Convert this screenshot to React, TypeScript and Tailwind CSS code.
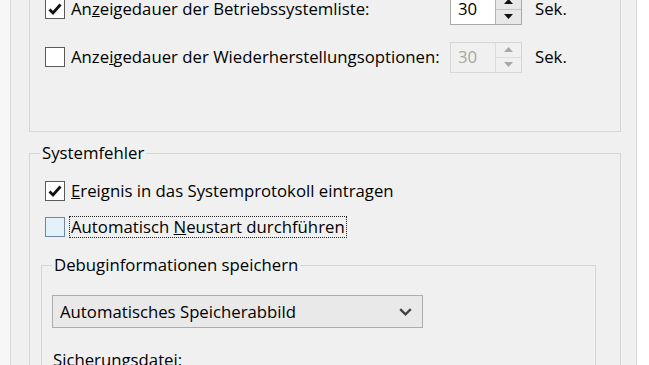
import type { ReactNode } from "react";

const font = { fontFamily: '"Open Sans", "Noto Sans", sans-serif' };

function Box({ checked, hover }: { checked?: boolean; hover?: boolean }) {
  return (
    <div
      className={`w-[20px] h-[20px] shrink-0 border flex items-center justify-center ${
        hover ? "border-[#6e8aa3] bg-[#e3f1fb]" : "border-[#5a5a5a] bg-white"
      }`}
    >
      {checked && (
        <svg width="14" height="12" viewBox="0 0 14 12">
          <path d="M1.5 6.5 L5 10 L12.5 1.5" fill="none" stroke="#111" strokeWidth="2.8" />
        </svg>
      )}
    </div>
  );
}

function Label({ children, focus }: { children: ReactNode; focus?: boolean }) {
  return (
    <span
      className={`border px-[1px] leading-[20px] whitespace-nowrap ${
        focus ? "border-dotted border-[#222]" : "border-transparent"
      }`}
    >
      {children}
    </span>
  );
}

function Spinner({ disabled }: { disabled?: boolean }) {
  const arrow = disabled ? "#a8a8a8" : "#111";
  return (
    <div
      className={`flex h-[31px] w-[72px] shrink-0 border ${
        disabled ? "border-[#d6d6d6] bg-[#f0f0f0] text-[#a6a6a6]" : "border-[#a9a9a9] bg-white text-black"
      }`}
    >
      <div className="flex-1 flex items-center pl-[7px]">30</div>
      <div
        className={`w-[26px] flex flex-col border-l ${
          disabled ? "border-[#dcdcdc] bg-[#f0f0f0]" : "border-[#b5b5b5] bg-[#e8e8e8]"
        }`}
      >
        <div className={`flex-1 flex items-center justify-center border-b ${disabled ? "border-[#dcdcdc]" : "border-[#c4c4c4]"}`}>
          <svg width="9" height="5" viewBox="0 0 9 5">
            <path d="M0 5 L4.5 0 L9 5 Z" fill={arrow} />
          </svg>
        </div>
        <div className="flex-1 flex items-center justify-center">
          <svg width="9" height="5" viewBox="0 0 9 5">
            <path d="M0 0 L4.5 5 L9 0 Z" fill={arrow} />
          </svg>
        </div>
      </div>
    </div>
  );
}

function TimeRow({ checked, children, disabled }: { checked?: boolean; children: ReactNode; disabled?: boolean }) {
  return (
    <div className="flex items-center h-[32px] pl-[15px]">
      <div className="flex items-center gap-[4px] w-[405px]">
        <Box checked={checked} />
        <Label>{children}</Label>
      </div>
      <Spinner disabled={disabled} />
      <span className="ml-[13px]">Sek.</span>
    </div>
  );
}

export default function App() {
  return (
    <div style={font} className="flex w-[649px] h-[365px] overflow-hidden bg-white text-[16.75px] text-black">
      <div className="w-[11px] shrink-0 bg-[#f7f7f7] border-r border-[#dadada]" />
      <div className="w-[626px] shrink-0 bg-[#f0f0f0] border-r border-[#d6d6d6] pl-[18px]">
        <div className="mt-[-30px] h-[162px] w-[592px] border border-[#d6d6d6] pt-[22px] flex flex-col gap-[16px]">
          <TimeRow checked>
            An<span className="underline">z</span>eigedauer der Betriebssystemliste:
          </TimeRow>
          <TimeRow disabled>
            Anze<span className="underline">i</span>gedauer der Wiederherstellungsoptionen:
          </TimeRow>
        </div>

        <fieldset className="mt-[11px] w-[592px] h-[260px] border border-[#d6d6d6]">
          <legend className="ml-[10px] px-[2px] leading-[20px]">Systemfehler</legend>
          <div className="mt-[16px] pl-[15px] flex flex-col gap-[12px]">
            <div className="flex items-center gap-[4px] h-[24px]">
              <Box checked />
              <Label>
                <span className="underline">E</span>reignis in das Systemprotokoll eintragen
              </Label>
            </div>
            <div className="flex items-center gap-[4px] h-[24px]">
              <Box hover />
              <Label focus>
                Automatisch <span className="underline">N</span>eustart durchführen
              </Label>
            </div>
          </div>

          <fieldset className="mt-[16px] ml-[11px] w-[555px] h-[140px] border border-[#d6d6d6]">
            <legend className="ml-[10px] px-[2px] leading-[20px]">Debuginformationen speichern</legend>
            <div className="mt-[20px] ml-[10px] w-[371px] h-[33px] border border-[#adadad] bg-[#e9e9e9] flex items-center justify-between pl-[7px] pr-[10px]">
              <span>Automatisches Speicherabbild</span>
              <svg width="13" height="8" viewBox="0 0 13 8">
                <path d="M1.2 1.2 L6.5 6.3 L11.8 1.2" fill="none" stroke="#444" strokeWidth="2.4" />
              </svg>
            </div>
            <div className="mt-[22px] ml-[11px] leading-[20px]">
              <span className="underline">S</span>icherungsdatei:
            </div>
          </fieldset>
        </fieldset>
      </div>
    </div>
  );
}
